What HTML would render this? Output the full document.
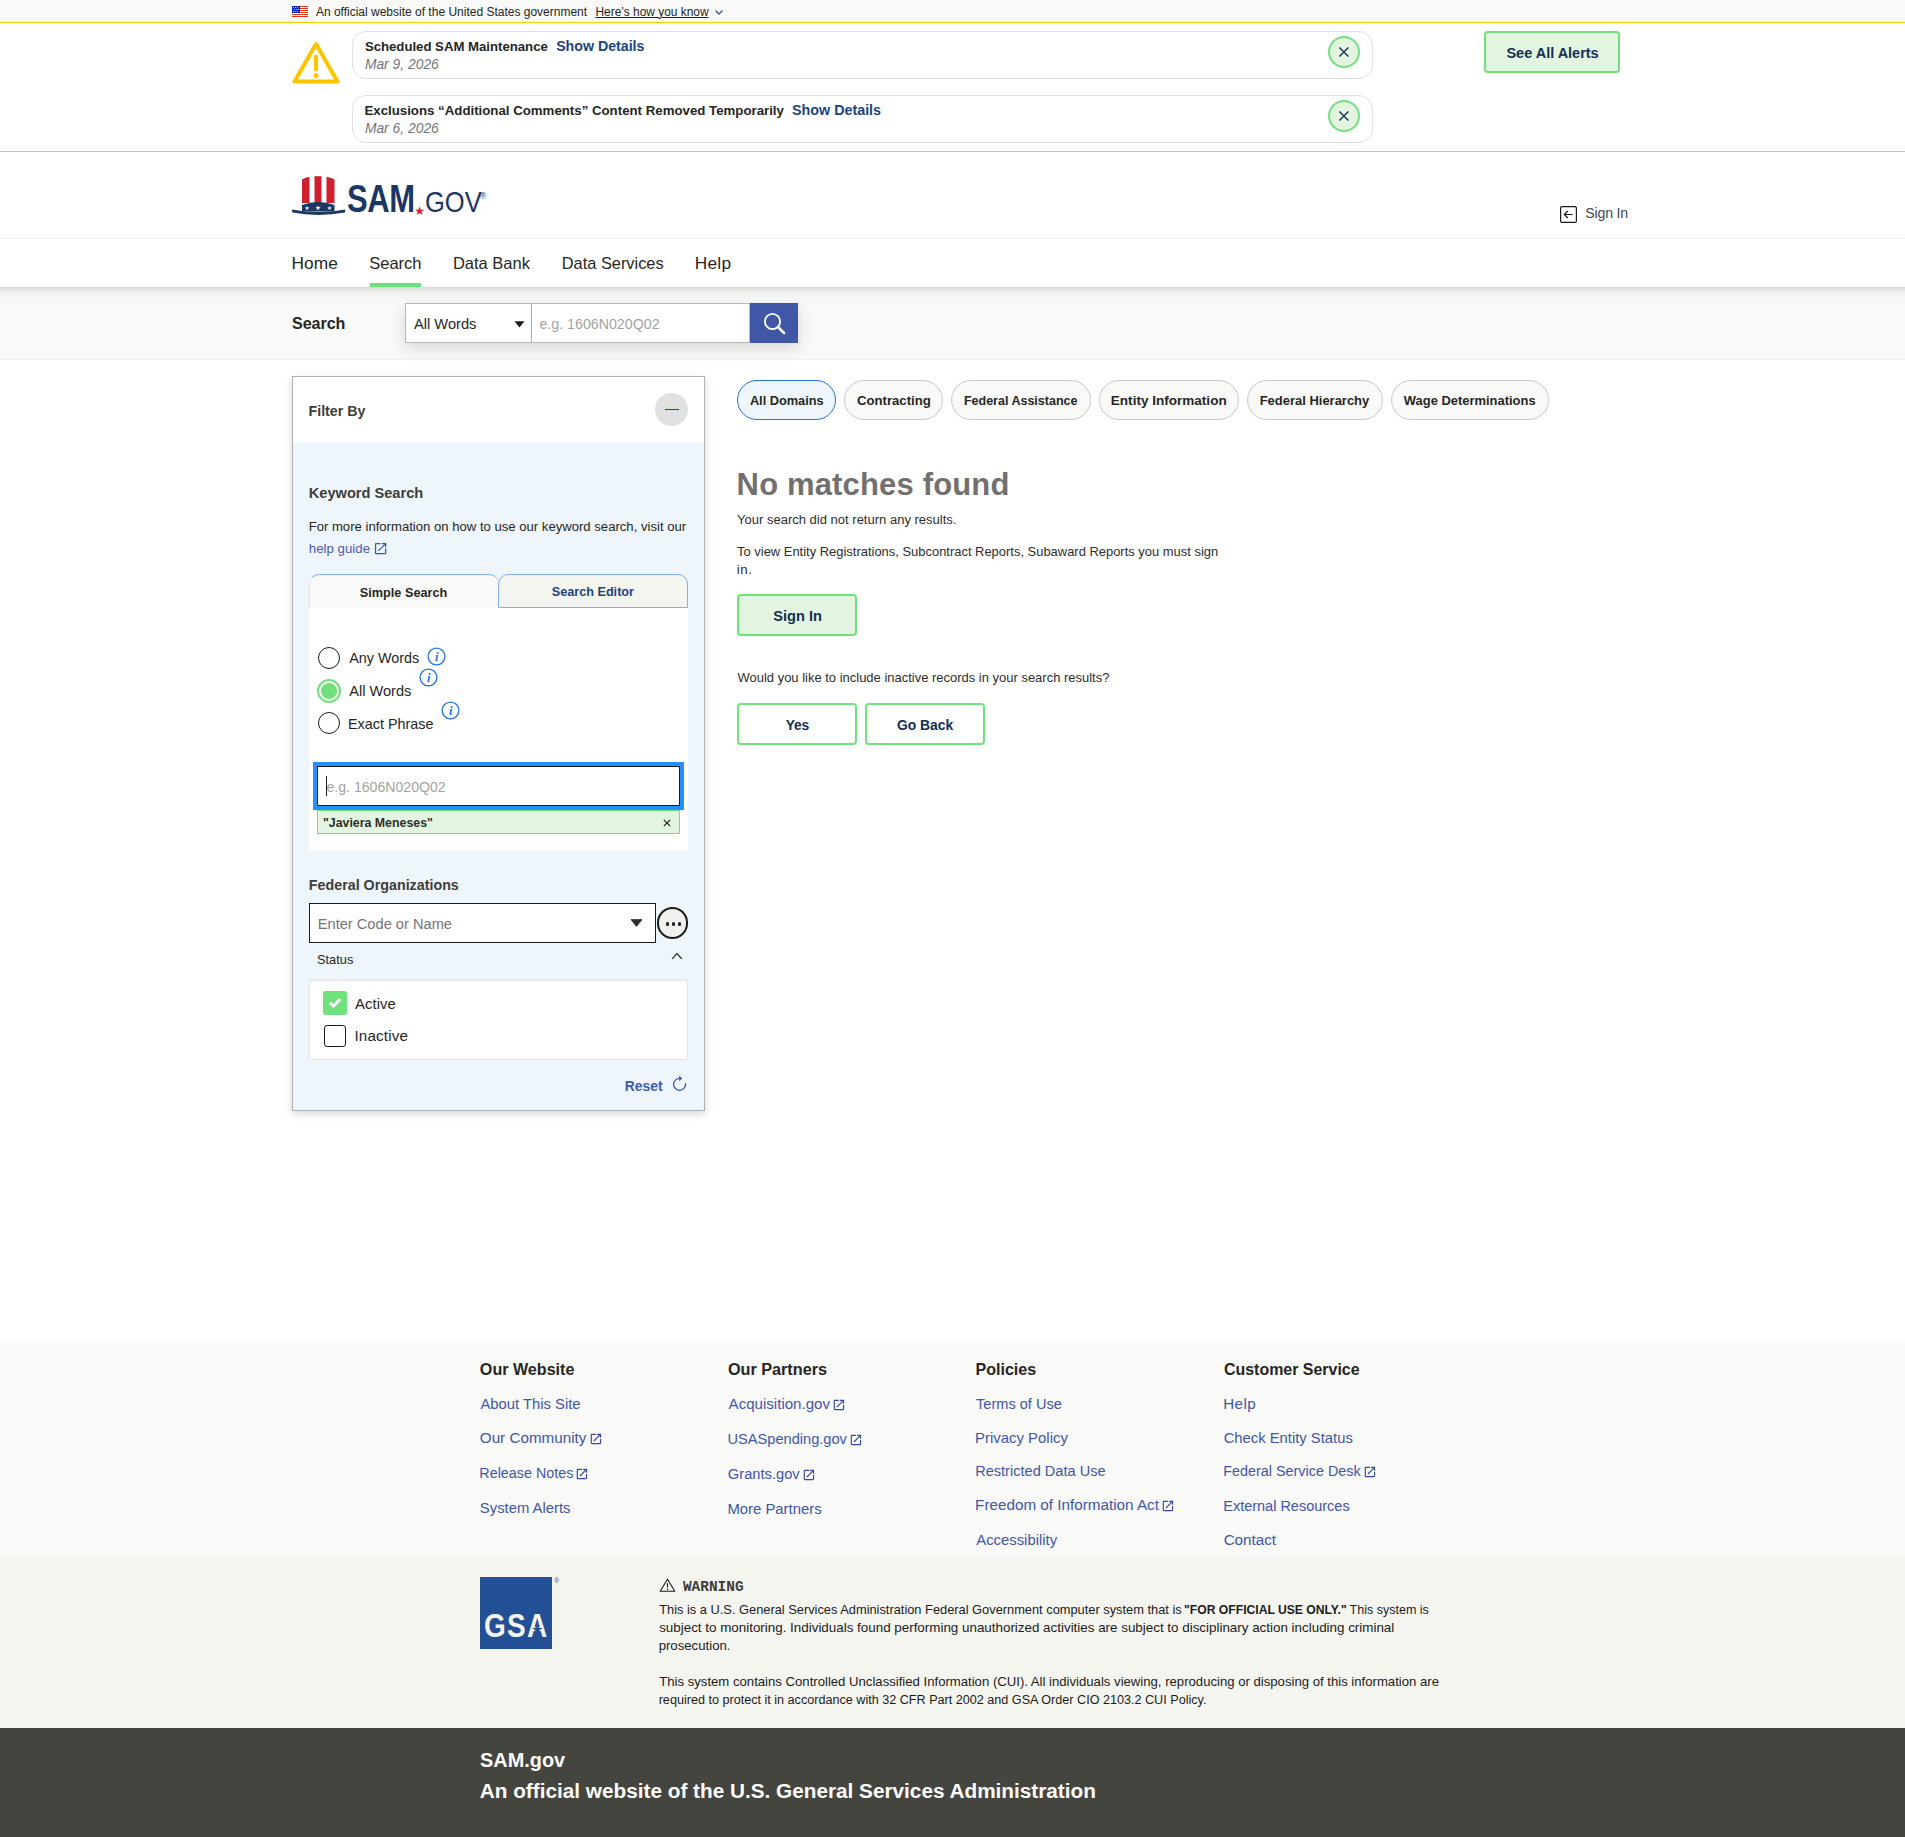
<!DOCTYPE html>
<html lang="en"><head><meta charset="utf-8"><title>SAM.gov | Search</title><style>html,body{margin:0;padding:0;}body{width:1905px;height:1837px;position:relative;overflow:hidden;background:#fff;font-family:"Liberation Sans",sans-serif;color:#262624;}
.b{position:absolute;display:block;}
.t{position:absolute;display:block;white-space:pre;line-height:1;}
h1,h2,h3,h4,p{margin:0;font-weight:400;}
.t::before{content:"";display:inline-block;width:0;height:60px;}
a{color:inherit;text-decoration:none;}</style></head><body>
<div class="b" style="left:0px;top:0px;width:1905px;height:22px;background:#f9f9f7;"></div>
<svg class="b" style="left:291px;top:5px;" width="18" height="13" viewBox="0 0 18 13"><rect width="18" height="13" fill="#fdfdfc"/><g shape-rendering="crispEdges"><rect x="1" y="1" width="16" height="1" fill="#e0391a"/><rect x="1" y="3" width="16" height="1" fill="#e0391a"/><rect x="1" y="5" width="16" height="1" fill="#e0391a"/><rect x="1" y="7" width="16" height="1" fill="#e0391a"/><rect x="1" y="9" width="16" height="1" fill="#e0391a"/><rect x="1" y="11" width="16" height="1" fill="#e0391a"/><rect x="1" y="1" width="8" height="7" fill="#0b27b5"/></g><circle cx="2.5" cy="2.5" r="0.5" fill="#fff"/><circle cx="4.5" cy="2.5" r="0.5" fill="#fff"/><circle cx="6.5" cy="2.5" r="0.5" fill="#fff"/><circle cx="3.5" cy="4.5" r="0.5" fill="#fff"/><circle cx="5.5" cy="4.5" r="0.5" fill="#fff"/><circle cx="7.5" cy="4.5" r="0.5" fill="#fff"/><circle cx="2.5" cy="6.5" r="0.5" fill="#fff"/><circle cx="4.5" cy="6.5" r="0.5" fill="#fff"/><circle cx="6.5" cy="6.5" r="0.5" fill="#fff"/></svg>
<span class="t" style="left:315.90px;top:-44.00px;font-size:12.01px;letter-spacing:-0.001px;">An official website of the United States government</span>
<span class="t" style="left:595.45px;top:-44.00px;font-size:11.93px;letter-spacing:0.002px;text-decoration:underline;text-underline-offset:1px;text-decoration-thickness:1px;">Here’s how you know</span>
<svg class="b" style="left:714px;top:9px;" width="10" height="7" viewBox="0 0 10 7"><path d="M1.5 1.5 L5 5 L8.5 1.5" fill="none" stroke="#3f57a6" stroke-width="1.4"/></svg>
<div class="b" style="left:0px;top:22px;width:1905px;height:130px;background:#fff;border-top:1px solid #face00;border-bottom:1px solid #face00;box-sizing:border-box;"></div>
<svg class="b" style="left:290px;top:39px;" width="52" height="47" viewBox="0 0 52 47"><path d="M26 5 L47.5 42.5 H4.5 Z" fill="none" stroke="#fdc500" stroke-width="4" stroke-linejoin="round"/><path d="M26 17.5 V30.5" stroke="#fdc500" stroke-width="4.2" stroke-linecap="round"/><circle cx="26" cy="36.6" r="2.6" fill="#fdc500"/></svg>
<div class="b" style="left:352px;top:31px;width:1021px;height:48px;border:1px solid #dfe1e2;border-radius:14px;box-sizing:border-box;background:#fff;"></div>
<span class="t" style="left:364.90px;top:-9.00px;font-size:13.21px;letter-spacing:-0.021px;font-weight:700;">Scheduled SAM Maintenance</span>
<a href="#" class="t" style="left:556.17px;top:-9.00px;font-size:14.2px;letter-spacing:-0.000px;font-weight:700;color:#1a4480;">Show Details</a>
<span class="t" style="left:364.88px;top:9.00px;font-size:13.85px;letter-spacing:0.003px;color:#71767a;font-style:italic;">Mar 9, 2026</span>
<div class="b" style="left:1328px;top:36px;width:32px;height:32px;border:2px solid #70e17b;border-radius:50%;box-sizing:border-box;background:#e3f5e1;"></div>
<svg class="b" style="left:1338px;top:46px;" width="12" height="12" viewBox="0 0 12 12"><path d="M1.4 1.4 L10.4 10.4 M10.4 1.4 L1.4 10.4" stroke="#162e51" stroke-width="1.35"/></svg>
<div class="b" style="left:352px;top:95px;width:1021px;height:48px;border:1px solid #dfe1e2;border-radius:14px;box-sizing:border-box;background:#fff;"></div>
<span class="t" style="left:364.44px;top:55.00px;font-size:13.25px;letter-spacing:0.001px;font-weight:700;">Exclusions “Additional Comments” Content Removed Temporarily</span>
<a href="#" class="t" style="left:792.07px;top:55.00px;font-size:14.3px;letter-spacing:-0.002px;font-weight:700;color:#1a4480;">Show Details</a>
<span class="t" style="left:364.88px;top:73.00px;font-size:13.85px;letter-spacing:0.003px;color:#71767a;font-style:italic;">Mar 6, 2026</span>
<div class="b" style="left:1328px;top:100px;width:32px;height:32px;border:2px solid #70e17b;border-radius:50%;box-sizing:border-box;background:#e3f5e1;"></div>
<svg class="b" style="left:1338px;top:110px;" width="12" height="12" viewBox="0 0 12 12"><path d="M1.4 1.4 L10.4 10.4 M10.4 1.4 L1.4 10.4" stroke="#162e51" stroke-width="1.35"/></svg>
<div class="b" style="left:1484px;top:31px;width:136px;height:42px;border:2px solid #70e17b;border-radius:4px;box-sizing:border-box;background:#e3f5e1;"></div>
<span class="t" style="left:1506.47px;top:-2.00px;font-size:14.48px;letter-spacing:-0.002px;font-weight:700;color:#162e51;">See All Alerts</span>
<svg class="b" style="left:290px;top:174px;" width="58" height="44" viewBox="0 0 58 44"><path d="M12 5.5 Q15.5 3.2 19.5 2.8 V29 H12 Z" fill="#d0202e"/><path d="M24.5 2.2 H31.5 V29 H24.5 Z" fill="#d0202e"/><path d="M36.5 2.8 Q40.5 3.2 44.5 5.5 V29 H36.5 Z" fill="#d0202e"/><path d="M12 31 Q28 25 44.5 31 V37.5 H12 Z" fill="#1c3664"/><path d="M2 35.6 Q28 40.6 55.2 35.6 L55 38.5 Q28 43.4 2.3 38.5 Z" fill="#1c3664"/><text x="17" y="36.2" font-size="5.5" fill="#fff" text-anchor="middle" font-family="DejaVu Sans,sans-serif">★</text><text x="28" y="35.8" font-size="6.5" fill="#fff" text-anchor="middle" font-family="DejaVu Sans,sans-serif">★</text><text x="39.5" y="36.2" font-size="5.5" fill="#fff" text-anchor="middle" font-family="DejaVu Sans,sans-serif">★</text></svg>
<span class="t" style="left:346.6px;top:152px;font-size:38px;font-weight:700;color:#1c3664;transform-origin:0 100%;transform:scaleX(0.815);letter-spacing:-0.5px;">SAM</span>
<span class="t" style="left:414.2px;top:154.8px;font-size:12px;color:#d0202e;font-family:'DejaVu Sans',sans-serif;">★</span>
<span class="t" style="left:424.8px;top:152px;font-size:29.2px;color:#1c3664;transform-origin:0 100%;transform:scaleX(0.875);">GOV</span>
<span class="t" style="left:480px;top:138.6px;font-size:8.5px;color:#1c3664;">®</span>
<svg class="b" style="left:1559px;top:205px;" width="19" height="19" viewBox="0 0 19 19"><rect x="1.6" y="1.6" width="15.8" height="15.8" rx="1.5" fill="none" stroke="#1b1b1b" stroke-width="1.2"/><path d="M13.5 9.5 H5.5 M8.8 6 L5.3 9.5 L8.8 13" fill="none" stroke="#1b1b1b" stroke-width="1.2"/></svg>
<a href="#" class="t" style="left:1585.36px;top:158.00px;font-size:14.14px;letter-spacing:-0.215px;color:#3d4551;">Sign In</a>
<div class="b" style="left:0px;top:238px;width:1905px;height:1px;background:#f0f0ec;"></div>
<a href="#" class="t" style="left:291.52px;top:209.00px;font-size:17.3px;letter-spacing:0.091px;">Home</a>
<a href="#" class="t" style="left:369.26px;top:209.00px;font-size:16.5px;letter-spacing:0.002px;">Search</a>
<a href="#" class="t" style="left:452.88px;top:209.00px;font-size:16.51px;letter-spacing:0.002px;">Data Bank</a>
<a href="#" class="t" style="left:561.79px;top:209.00px;font-size:16.38px;letter-spacing:0.002px;">Data Services</a>
<a href="#" class="t" style="left:694.72px;top:209.00px;font-size:17.3px;letter-spacing:0.275px;">Help</a>
<div class="b" style="left:370px;top:283px;width:51px;height:4px;background:#6be07d;"></div>
<div class="b" style="left:0px;top:287px;width:1905px;height:73px;background:#f9f9f7;border-bottom:1px solid #f0f0ec;box-sizing:border-box;"></div>
<div class="b" style="left:0px;top:287px;width:1905px;height:12px;background:linear-gradient(to bottom,rgba(0,0,0,0.13),rgba(0,0,0,0.04) 45%,rgba(0,0,0,0));"></div>
<span class="t" style="left:292.02px;top:269.00px;font-size:16.1px;letter-spacing:-0.049px;font-weight:700;">Search</span>
<div class="b" style="left:405px;top:303px;width:393px;height:40px;box-shadow:0 5px 16px rgba(0,0,0,0.14);"></div>
<div class="b" style="left:405px;top:303px;width:126.5px;height:40px;background:#fff;border:1px solid #b8b8b6;box-sizing:border-box;"></div>
<div class="b" style="left:531px;top:303px;width:219px;height:40px;background:#fff;border:1px solid #b8b8b6;border-left:1px solid #a9a9a7;box-sizing:border-box;"></div>
<span class="t" style="left:413.90px;top:269.00px;font-size:14.7px;letter-spacing:-0.001px;">All Words</span>
<svg class="b" style="left:513.5px;top:321px;" width="11" height="7" viewBox="0 0 11 7"><path d="M0.5 0.3 H10.5 L5.5 6.6 Z" fill="#1b1b1b"/></svg>
<span class="t" style="left:539.43px;top:269.00px;font-size:14.23px;letter-spacing:-0.002px;color:#a3a3a0;">e.g. 1606N020Q02</span>
<div class="b" style="left:750px;top:303px;width:48px;height:40px;background:#3f57a6;"></div>
<svg class="b" style="left:762px;top:311px;" width="26" height="26" viewBox="0 0 26 26"><circle cx="10.5" cy="10.5" r="7.6" fill="none" stroke="#fff" stroke-width="1.9"/><path d="M16 16 L22 22" stroke="#fff" stroke-width="2.6" stroke-linecap="round"/></svg>
<div class="b" style="left:292px;top:376px;width:413px;height:735px;background:#eff6fb;border:1px solid #b0b0ae;box-sizing:border-box;box-shadow:0 3px 8px rgba(0,0,0,0.16);"></div>
<div class="b" style="left:293px;top:377px;width:411px;height:65px;background:#fff;"></div>
<h2 class="t" style="left:308.58px;top:356.00px;font-size:14.2px;letter-spacing:-0.001px;font-weight:700;color:#3d3d3a;">Filter By</h2>
<div class="b" style="left:655px;top:393px;width:33px;height:33px;background:#e1e1e0;border-radius:50%;"></div>
<div class="b" style="left:665px;top:408.8px;width:14px;height:1.6px;background:#1a4480;"></div>
<h3 class="t" style="left:308.75px;top:438.00px;font-size:14.62px;letter-spacing:-0.002px;font-weight:700;color:#3d3d3a;">Keyword Search</h3>
<span class="t" style="left:308.65px;top:471.00px;font-size:13.11px;letter-spacing:0.001px;">For more information on how to use our keyword search, visit our</span>
<a href="#" class="t" style="left:308.77px;top:493.00px;font-size:13.27px;letter-spacing:0.002px;color:#4a5bb0;">help guide</a>
<svg class="b" style="left:373.1px;top:540.7px;" width="15.2" height="15.2" viewBox="0 0 24 24"><path fill="#3f57a6" d="M19 19H5V5h7V3H5c-1.11 0-2 .9-2 2v14c0 1.1.89 2 2 2h14c1.1 0 2-.9 2-2v-7h-2v7zM14 3v2h3.59l-9.83 9.83 1.41 1.41L19 6.41V10h2V3h-7z"/></svg>
<div class="b" style="left:309px;top:574px;width:189.5px;height:34px;background:#f9f9f7;border-top:1px solid #81aefc;border-left:1px solid #dbe6f7;border-radius:10px 10px 0 0;box-sizing:border-box;"></div>
<div class="b" style="left:498px;top:574px;width:190px;height:33.5px;background:#f5f5f0;border:1px solid #81aefc;border-radius:10px 10px 0 0;box-sizing:border-box;"></div>
<span class="t" style="left:359.82px;top:537.00px;font-size:12.69px;letter-spacing:0.001px;font-weight:700;">Simple Search</span>
<span class="t" style="left:551.82px;top:536.00px;font-size:12.65px;letter-spacing:-0.002px;font-weight:700;color:#1a4480;">Search Editor</span>
<div class="b" style="left:309px;top:608px;width:379px;height:242px;background:#fff;"></div>
<div class="b" style="left:318px;top:647px;width:22px;height:22px;border:1.6px solid #1b1b1b;border-radius:50%;box-sizing:border-box;background:#fff;"></div>
<span class="t" style="left:349.20px;top:603.00px;font-size:14.4px;letter-spacing:-0.003px;">Any Words</span>
<div class="b" style="left:317px;top:679px;width:24px;height:24px;border:2px solid #70e17b;border-radius:50%;box-sizing:border-box;background:#fff;"></div>
<div class="b" style="left:321px;top:683px;width:16px;height:16px;border-radius:50%;background:#70e17b;"></div>
<span class="t" style="left:349.20px;top:636.00px;font-size:14.58px;letter-spacing:-0.000px;">All Words</span>
<div class="b" style="left:318px;top:712px;width:22px;height:22px;border:1.6px solid #1b1b1b;border-radius:50%;box-sizing:border-box;background:#fff;"></div>
<span class="t" style="left:348.05px;top:669.00px;font-size:14.37px;letter-spacing:-0.000px;">Exact Phrase</span>
<svg class="b" style="left:426.5px;top:646.6px;" width="19" height="19" viewBox="0 0 19 19"><circle cx="9.5" cy="9.5" r="8.4" fill="none" stroke="#2672de" stroke-width="1.3"/><text x="9.7" y="13.9" font-family="Liberation Serif,serif" font-style="italic" font-weight="700" font-size="12.5" fill="#2672de" text-anchor="middle">i</text></svg>
<svg class="b" style="left:418.7px;top:667.7px;" width="19" height="19" viewBox="0 0 19 19"><circle cx="9.5" cy="9.5" r="8.4" fill="none" stroke="#2672de" stroke-width="1.3"/><text x="9.7" y="13.9" font-family="Liberation Serif,serif" font-style="italic" font-weight="700" font-size="12.5" fill="#2672de" text-anchor="middle">i</text></svg>
<svg class="b" style="left:440.5px;top:700.9px;" width="19" height="19" viewBox="0 0 19 19"><circle cx="9.5" cy="9.5" r="8.4" fill="none" stroke="#2672de" stroke-width="1.3"/><text x="9.7" y="13.9" font-family="Liberation Serif,serif" font-style="italic" font-weight="700" font-size="12.5" fill="#2672de" text-anchor="middle">i</text></svg>
<div class="b" style="left:313px;top:762px;width:371px;height:48px;background:#2491ff;"></div>
<div class="b" style="left:317px;top:766px;width:363px;height:40px;background:#fff;border:1px solid #1b1b1b;box-sizing:border-box;"></div>
<span class="t" style="left:326.44px;top:732.00px;font-size:14.12px;letter-spacing:-0.001px;color:#a3a3a0;">e.g. 1606N020Q02</span>
<div class="b" style="left:326px;top:776.3px;width:1px;height:19.4px;background:#1b1b1b;"></div>
<div class="b" style="left:317px;top:810px;width:363px;height:24px;background:#e3f5e1;border:1px solid #70e17b;box-sizing:border-box;"></div>
<span class="t" style="left:322.90px;top:767.00px;font-size:12.37px;letter-spacing:0.001px;font-weight:700;color:#2e2e2a;">"Javiera Meneses"</span>
<svg class="b" style="left:663px;top:819.3px;" width="8" height="8" viewBox="0 0 8 8"><path d="M0.8 0.8 L7.2 7.2 M7.2 0.8 L0.8 7.2" stroke="#1b1b1b" stroke-width="1.2"/></svg>
<h3 class="t" style="left:308.87px;top:830.00px;font-size:14.29px;letter-spacing:-0.002px;font-weight:700;color:#3d3d3a;">Federal Organizations</h3>
<div class="b" style="left:309px;top:903px;width:347px;height:40px;background:#fff;border:1px solid #1b1b1b;box-sizing:border-box;"></div>
<span class="t" style="left:317.73px;top:869.00px;font-size:14.65px;letter-spacing:0.001px;color:#757575;">Enter Code or Name</span>
<svg class="b" style="left:629.5px;top:919px;" width="13" height="8" viewBox="0 0 13 8"><path d="M1 0.6 H12 L6.5 7.4 Z" fill="#2e2e2a" stroke="#2e2e2a" stroke-width="0.8" stroke-linejoin="round"/></svg>
<div class="b" style="left:656.6px;top:907.4px;width:31.2px;height:31.2px;border:2px solid #1b1b1b;border-radius:50%;box-sizing:border-box;background:#f0f0ec;"></div>
<div class="b" style="left:665.8px;top:922.4px;width:3.2px;height:3.2px;background:#1b1b1b;border-radius:50%;"></div>
<div class="b" style="left:671.6999999999999px;top:922.4px;width:3.2px;height:3.2px;background:#1b1b1b;border-radius:50%;"></div>
<div class="b" style="left:677.5px;top:922.4px;width:3.2px;height:3.2px;background:#1b1b1b;border-radius:50%;"></div>
<span class="t" style="left:317.02px;top:904.00px;font-size:12.81px;letter-spacing:0.002px;">Status</span>
<svg class="b" style="left:670.5px;top:951.5px;" width="12" height="8" viewBox="0 0 12 8"><path d="M1.2 6.8 L6 1.6 L10.8 6.8" fill="none" stroke="#1b1b1b" stroke-width="1.2"/></svg>
<div class="b" style="left:309px;top:979.3px;width:379px;height:80.5px;background:#fff;border:1px solid #e6e6e2;box-sizing:border-box;box-shadow:inset 0 2px 2px rgba(0,0,0,0.06);"></div>
<div class="b" style="left:323px;top:991px;width:24px;height:24px;background:#70e17b;border-radius:3px;"></div>
<svg class="b" style="left:328px;top:996px;" width="14" height="13" viewBox="0 0 14 13"><path d="M2 6.6 L5.6 10 L12.2 2.9" fill="none" stroke="#fff" stroke-width="3"/></svg>
<span class="t" style="left:355.00px;top:949.00px;font-size:14.83px;letter-spacing:0.071px;">Active</span>
<div class="b" style="left:324px;top:1025px;width:22px;height:22px;border:1.6px solid #1b1b1b;border-radius:3px;box-sizing:border-box;background:#fff;"></div>
<span class="t" style="left:354.43px;top:981.00px;font-size:15.26px;letter-spacing:0.130px;">Inactive</span>
<span class="t" style="left:624.80px;top:1031.00px;font-size:13.88px;letter-spacing:-0.003px;font-weight:700;color:#3f5bb5;">Reset</span>
<svg class="b" style="left:671.6px;top:1075.2px;" width="15" height="17" viewBox="0 0 15 17"><path d="M8.3 3.4 A6 6 0 1 0 13.5 8.2" fill="none" stroke="#3f57a6" stroke-width="1.25"/><path d="M7.2 0.6 L10.2 3.4 L7.2 6.2 Z" fill="#3f57a6"/></svg>
<div class="b" style="left:737px;top:380px;width:99px;height:40px;background:#eff6fb;border:1px solid #2672de;border-radius:20px;box-sizing:border-box;"></div>
<span class="t" style="left:749.88px;top:345.00px;font-size:12.77px;letter-spacing:0.002px;font-weight:700;">All Domains</span>
<div class="b" style="left:844px;top:380px;width:99px;height:40px;background:#f9f9f7;border:1px solid #c9c9c5;border-radius:20px;box-sizing:border-box;"></div>
<span class="t" style="left:856.97px;top:345.00px;font-size:13.17px;letter-spacing:-0.000px;font-weight:700;">Contracting</span>
<div class="b" style="left:951px;top:380px;width:139.5999999999999px;height:40px;background:#f9f9f7;border:1px solid #c9c9c5;border-radius:20px;box-sizing:border-box;"></div>
<span class="t" style="left:963.89px;top:345.00px;font-size:12.52px;letter-spacing:0.000px;font-weight:700;">Federal Assistance</span>
<div class="b" style="left:1099px;top:380px;width:139.70000000000005px;height:40px;background:#f9f9f7;border:1px solid #c9c9c5;border-radius:20px;box-sizing:border-box;"></div>
<span class="t" style="left:1110.82px;top:345.00px;font-size:13.55px;letter-spacing:-0.002px;font-weight:700;">Entity Information</span>
<div class="b" style="left:1247px;top:380px;width:135.79999999999995px;height:40px;background:#f9f9f7;border:1px solid #c9c9c5;border-radius:20px;box-sizing:border-box;"></div>
<span class="t" style="left:1259.66px;top:345.00px;font-size:12.98px;letter-spacing:0.002px;font-weight:700;">Federal Hierarchy</span>
<div class="b" style="left:1391px;top:380px;width:157.70000000000005px;height:40px;background:#f9f9f7;border:1px solid #c9c9c5;border-radius:20px;box-sizing:border-box;"></div>
<span class="t" style="left:1403.80px;top:345.00px;font-size:12.94px;letter-spacing:0.001px;font-weight:700;">Wage Determinations</span>
<h1 class="t" style="left:736.59px;top:435.00px;font-size:31px;letter-spacing:0.161px;font-weight:700;color:#71706e;">No matches found</h1>
<span class="t" style="left:737.04px;top:464.00px;font-size:13.02px;letter-spacing:-0.001px;color:#2e2e2a;">Your search did not return any results.</span>
<span class="t" style="left:737.04px;top:496.00px;font-size:12.94px;letter-spacing:0.001px;color:#2e2e2a;">To view Entity Registrations, Subcontract Reports, Subaward Reports you must sign</span>
<span class="t" style="left:736.74px;top:514.00px;font-size:13.29px;letter-spacing:0.586px;color:#2e2e2a;">in.</span>
<div class="b" style="left:737px;top:594px;width:120px;height:42px;border:2px solid #70e17b;border-radius:4px;box-sizing:border-box;background:#e3f5e1;"></div>
<span class="t" style="left:773.26px;top:561.00px;font-size:14.6px;letter-spacing:-0.001px;font-weight:700;color:#162e51;">Sign In</span>
<span class="t" style="left:737.54px;top:622.00px;font-size:12.97px;letter-spacing:0.002px;color:#2e2e2a;">Would you like to include inactive records in your search results?</span>
<div class="b" style="left:737px;top:703px;width:120px;height:42px;border:2px solid #70e17b;border-radius:4px;box-sizing:border-box;background:#fff;"></div>
<span class="t" style="left:785.79px;top:670.00px;font-size:13.77px;letter-spacing:-0.148px;font-weight:700;color:#162e51;">Yes</span>
<div class="b" style="left:865px;top:703px;width:120px;height:42px;border:2px solid #70e17b;border-radius:4px;box-sizing:border-box;background:#fff;"></div>
<span class="t" style="left:896.95px;top:670.00px;font-size:13.87px;letter-spacing:0.002px;font-weight:700;color:#162e51;">Go Back</span>
<div class="b" style="left:0px;top:1343px;width:1905px;height:214px;background:#f9f9f7;"></div>
<div class="b" style="left:0px;top:1556.5px;width:1905px;height:171px;background:#f5f5f0;"></div>
<div class="b" style="left:0px;top:1728px;width:1905px;height:109px;background:#454540;"></div>
<h4 class="t" style="left:479.86px;top:1315.00px;font-size:16.1px;letter-spacing:0.002px;font-weight:700;">Our Website</h4>
<h4 class="t" style="left:727.95px;top:1315.00px;font-size:16.22px;letter-spacing:-0.001px;font-weight:700;">Our Partners</h4>
<h4 class="t" style="left:975.56px;top:1315.00px;font-size:16.05px;letter-spacing:0.002px;font-weight:700;">Policies</h4>
<h4 class="t" style="left:1223.96px;top:1315.00px;font-size:15.96px;letter-spacing:-0.002px;font-weight:700;">Customer Service</h4>
<a href="#" class="t" style="left:480.50px;top:1349.00px;font-size:14.81px;letter-spacing:-0.002px;color:#3f57a6;">About This Site</a>
<a href="#" class="t" style="left:479.81px;top:1383.00px;font-size:15.24px;letter-spacing:0.000px;color:#3f57a6;">Our Community</a>
<svg class="b" style="left:588.77px;top:1431.67px;" width="13.87" height="13.87" viewBox="0 0 24 24"><path fill="#34499f" d="M19 19H5V5h7V3H5c-1.11 0-2 .9-2 2v14c0 1.1.89 2 2 2h14c1.1 0 2-.9 2-2v-7h-2v7zM14 3v2h3.59l-9.83 9.83 1.41 1.41L19 6.41V10h2V3h-7z"/></svg>
<a href="#" class="t" style="left:479.35px;top:1418.00px;font-size:14.34px;letter-spacing:-0.002px;color:#3f57a6;">Release Notes</a>
<svg class="b" style="left:575.17px;top:1466.67px;" width="13.87" height="13.87" viewBox="0 0 24 24"><path fill="#34499f" d="M19 19H5V5h7V3H5c-1.11 0-2 .9-2 2v14c0 1.1.89 2 2 2h14c1.1 0 2-.9 2-2v-7h-2v7zM14 3v2h3.59l-9.83 9.83 1.41 1.41L19 6.41V10h2V3h-7z"/></svg>
<a href="#" class="t" style="left:479.83px;top:1453.00px;font-size:14.83px;letter-spacing:0.000px;color:#3f57a6;">System Alerts</a>
<a href="#" class="t" style="left:728.60px;top:1349.00px;font-size:15.09px;letter-spacing:-0.000px;color:#3f57a6;">Acquisition.gov</a>
<svg class="b" style="left:832.27px;top:1397.67px;" width="13.87" height="13.87" viewBox="0 0 24 24"><path fill="#34499f" d="M19 19H5V5h7V3H5c-1.11 0-2 .9-2 2v14c0 1.1.89 2 2 2h14c1.1 0 2-.9 2-2v-7h-2v7zM14 3v2h3.59l-9.83 9.83 1.41 1.41L19 6.41V10h2V3h-7z"/></svg>
<a href="#" class="t" style="left:727.50px;top:1384.00px;font-size:14.61px;letter-spacing:0.002px;color:#3f57a6;">USASpending.gov</a>
<svg class="b" style="left:849.17px;top:1432.67px;" width="13.87" height="13.87" viewBox="0 0 24 24"><path fill="#34499f" d="M19 19H5V5h7V3H5c-1.11 0-2 .9-2 2v14c0 1.1.89 2 2 2h14c1.1 0 2-.9 2-2v-7h-2v7zM14 3v2h3.59l-9.83 9.83 1.41 1.41L19 6.41V10h2V3h-7z"/></svg>
<a href="#" class="t" style="left:727.87px;top:1419.00px;font-size:14.68px;letter-spacing:0.002px;color:#3f57a6;">Grants.gov</a>
<svg class="b" style="left:801.87px;top:1467.67px;" width="13.87" height="13.87" viewBox="0 0 24 24"><path fill="#34499f" d="M19 19H5V5h7V3H5c-1.11 0-2 .9-2 2v14c0 1.1.89 2 2 2h14c1.1 0 2-.9 2-2v-7h-2v7zM14 3v2h3.59l-9.83 9.83 1.41 1.41L19 6.41V10h2V3h-7z"/></svg>
<a href="#" class="t" style="left:727.41px;top:1454.00px;font-size:14.89px;letter-spacing:-0.001px;color:#3f57a6;">More Partners</a>
<a href="#" class="t" style="left:976.01px;top:1349.00px;font-size:14.58px;letter-spacing:-0.000px;color:#3f57a6;">Terms of Use</a>
<a href="#" class="t" style="left:975.11px;top:1383.00px;font-size:14.91px;letter-spacing:-0.002px;color:#3f57a6;">Privacy Policy</a>
<a href="#" class="t" style="left:975.13px;top:1416.00px;font-size:14.59px;letter-spacing:0.002px;color:#3f57a6;">Restricted Data Use</a>
<a href="#" class="t" style="left:975.08px;top:1450.00px;font-size:15.26px;letter-spacing:-0.002px;color:#3f57a6;">Freedom of Information Act</a>
<svg class="b" style="left:1161.27px;top:1498.67px;" width="13.87" height="13.87" viewBox="0 0 24 24"><path fill="#34499f" d="M19 19H5V5h7V3H5c-1.11 0-2 .9-2 2v14c0 1.1.89 2 2 2h14c1.1 0 2-.9 2-2v-7h-2v7zM14 3v2h3.59l-9.83 9.83 1.41 1.41L19 6.41V10h2V3h-7z"/></svg>
<a href="#" class="t" style="left:976.30px;top:1485.00px;font-size:14.84px;letter-spacing:-0.000px;color:#3f57a6;">Accessibility</a>
<a href="#" class="t" style="left:1223.19px;top:1349.00px;font-size:15.14px;letter-spacing:0.435px;color:#3f57a6;">Help</a>
<a href="#" class="t" style="left:1223.66px;top:1383.00px;font-size:14.81px;letter-spacing:0.002px;color:#3f57a6;">Check Entity Status</a>
<a href="#" class="t" style="left:1223.25px;top:1416.00px;font-size:14.39px;letter-spacing:-0.001px;color:#3f57a6;">Federal Service Desk</a>
<svg class="b" style="left:1363.07px;top:1464.67px;" width="13.87" height="13.87" viewBox="0 0 24 24"><path fill="#34499f" d="M19 19H5V5h7V3H5c-1.11 0-2 .9-2 2v14c0 1.1.89 2 2 2h14c1.1 0 2-.9 2-2v-7h-2v7zM14 3v2h3.59l-9.83 9.83 1.41 1.41L19 6.41V10h2V3h-7z"/></svg>
<a href="#" class="t" style="left:1223.24px;top:1451.00px;font-size:14.49px;letter-spacing:0.002px;color:#3f57a6;">External Resources</a>
<a href="#" class="t" style="left:1223.64px;top:1485.00px;font-size:15.22px;letter-spacing:0.001px;color:#3f57a6;">Contact</a>
<div class="b" style="left:480px;top:1577px;width:72px;height:72px;background:#234f94;"></div>
<span class="t" style="left:483.6px;top:1577px;font-size:33.5px;font-weight:700;color:#f5f5f0;transform-origin:0 100%;transform:scaleX(0.835);letter-spacing:1.6px;">GSA</span>
<span class="t" style="left:531.2px;top:1573.6px;font-size:13.5px;color:#234f94;font-family:'DejaVu Sans',sans-serif;">★</span>
<span class="t" style="left:554.3px;top:1522.5px;font-size:6.5px;color:#234f94;">®</span>
<svg class="b" style="left:659px;top:1578px;" width="17" height="14" viewBox="0 0 17 14"><path d="M8.5 1.2 L15.8 13.2 H1.2 Z" fill="none" stroke="#1b1b1b" stroke-width="1.1" stroke-linejoin="round"/><path d="M8.5 5.2 V9.4" stroke="#1b1b1b" stroke-width="1.2"/><circle cx="8.5" cy="11.2" r="0.8" fill="#1b1b1b"/></svg>
<span class="t" style="left:682.90px;top:1531.00px;font-size:14.46px;letter-spacing:-0.002px;font-weight:700;color:#3d3d38;font-family:'Liberation Mono',monospace;">WARNING</span>
<span class="t" style="left:659.24px;top:1554.00px;font-size:12.83px;letter-spacing:-0.002px;color:#1b1b1b;">This is a U.S. General Services Administration Federal Government computer system that is</span>
<span class="t" style="left:1184.11px;top:1554.00px;font-size:12.15px;letter-spacing:0.001px;font-weight:700;color:#1b1b1b;">"FOR OFFICIAL USE ONLY."</span>
<span class="t" style="left:1349.55px;top:1554.00px;font-size:12.53px;letter-spacing:0.001px;color:#1b1b1b;">This system is</span>
<span class="t" style="left:659.16px;top:1572.00px;font-size:13.4px;letter-spacing:-0.002px;color:#1b1b1b;">subject to monitoring. Individuals found performing unauthorized activities are subject to disciplinary action including criminal</span>
<span class="t" style="left:658.64px;top:1590.00px;font-size:13.2px;letter-spacing:0.000px;color:#1b1b1b;">prosecution.</span>
<span class="t" style="left:659.24px;top:1626.00px;font-size:13.15px;letter-spacing:-0.002px;color:#1b1b1b;">This system contains Controlled Unclassified Information (CUI). All individuals viewing, reproducing or disposing of this information are</span>
<span class="t" style="left:658.68px;top:1644.00px;font-size:12.61px;letter-spacing:-0.001px;color:#1b1b1b;">required to protect it in accordance with 32 CFR Part 2002 and GSA Order CIO 2103.2 CUI Policy.</span>
<span class="t" style="left:480.10px;top:1707.00px;font-size:19.88px;letter-spacing:0.002px;font-weight:700;color:#fff;">SAM.gov</span>
<span class="t" style="left:479.78px;top:1738.00px;font-size:20.75px;letter-spacing:-0.000px;font-weight:700;color:#fff;">An official website of the U.S. General Services Administration</span>
</body></html>
